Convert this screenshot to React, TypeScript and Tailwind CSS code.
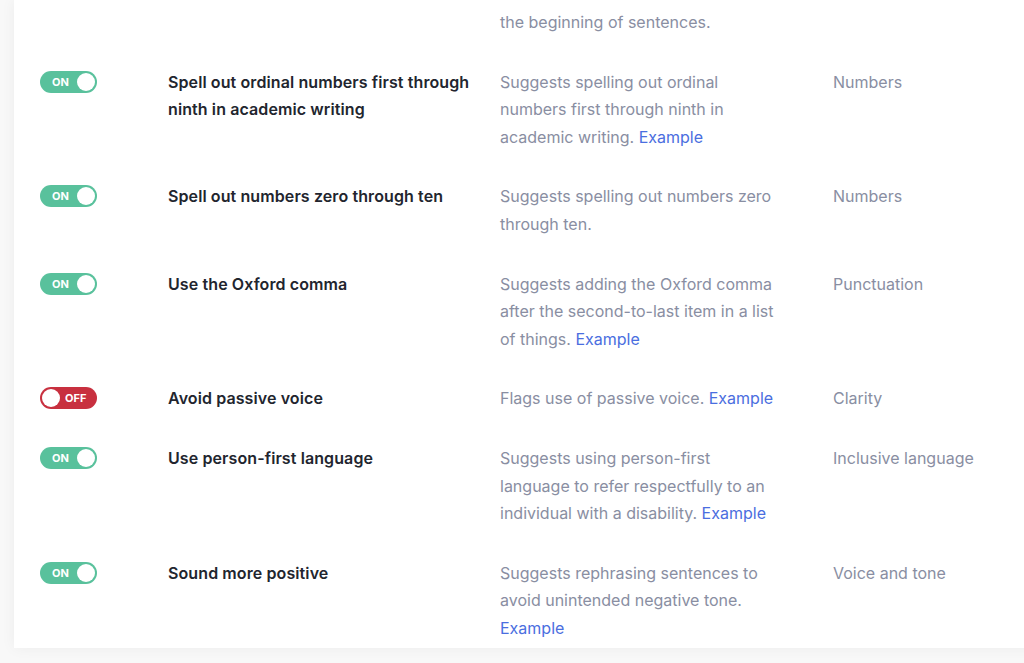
import React from "react";

type Rule = {
  enabled: boolean;
  title: string;
  description: string;
  example?: boolean;
  category: string;
};

const rules: Rule[] = [
  {
    enabled: true,
    title: "Spell out ordinal numbers first through ninth in academic writing",
    description: "Suggests spelling out ordinal numbers first through ninth in academic writing.",
    example: true,
    category: "Numbers",
  },
  {
    enabled: true,
    title: "Spell out numbers zero through ten",
    description: "Suggests spelling out numbers zero through ten.",
    category: "Numbers",
  },
  {
    enabled: true,
    title: "Use the Oxford comma",
    description: "Suggests adding the Oxford comma after the second-to-last item in a list of things.",
    example: true,
    category: "Punctuation",
  },
  {
    enabled: false,
    title: "Avoid passive voice",
    description: "Flags use of passive voice.",
    example: true,
    category: "Clarity",
  },
  {
    enabled: true,
    title: "Use person-first language",
    description: "Suggests using person-first language to refer respectfully to an individual with a disability.",
    example: true,
    category: "Inclusive language",
  },
  {
    enabled: true,
    title: "Sound more positive",
    description: "Suggests rephrasing sentences to avoid unintended negative tone.",
    example: true,
    category: "Voice and tone",
  },
];

function Toggle({ on }: { on: boolean }) {
  if (on) {
    return (
      <div className="relative h-[22px] w-[57px] rounded-full bg-[#59c19c]">
        <span className="absolute left-[12px] top-[4px] text-[11px] font-bold leading-[14px] text-white">ON</span>
        <span className="absolute right-[2px] top-[2px] h-[18px] w-[18px] rounded-full bg-white" />
      </div>
    );
  }
  return (
    <div className="relative h-[22px] w-[57px] rounded-full bg-[#c8303f]">
      <span className="absolute left-[2px] top-[2px] h-[18px] w-[18px] rounded-full bg-white" />
      <span className="absolute left-[25px] top-[4px] text-[11px] font-bold leading-[14px] text-white">OFF</span>
    </div>
  );
}

function RuleRow({ rule }: { rule: Rule }) {
  return (
    <div className="grid grid-cols-[128px_332px_333px_1fr] py-[16px]">
      <div className="pt-[2px]">
        <Toggle on={rule.enabled} />
      </div>
      <div className="pr-[12px] font-semibold tracking-[0.1px] text-[#22252e]">{rule.title}</div>
      <div className="w-[282px] text-[#898ea2]">
        {rule.description}
        {rule.example ? (
          <>
            {" "}
            <a className="text-[#4a6ee0]">Example</a>
          </>
        ) : null}
      </div>
      <div className="text-[#898ea2]">{rule.category}</div>
    </div>
  );
}

export default function App() {
  return (
    <div
      className="h-[663px] w-[1024px] overflow-hidden bg-[#f8f8f8]"
      style={{ fontFamily: "Inter, 'Noto Sans', sans-serif" }}
    >
      <div className="ml-[14px] mr-[-20px] h-[648px] overflow-hidden bg-white pl-[26px] text-[16px] leading-[27.6px] shadow-[0_0_14px_rgba(0,0,0,0.05)]">
        <div className="grid grid-cols-[128px_332px_333px_1fr] pb-[16px] pt-[9px]">
          <div />
          <div />
          <div className="text-[#898ea2]">the beginning of sentences.</div>
          <div />
        </div>
        {rules.map((rule) => (
          <RuleRow key={rule.title} rule={rule} />
        ))}
      </div>
    </div>
  );
}
